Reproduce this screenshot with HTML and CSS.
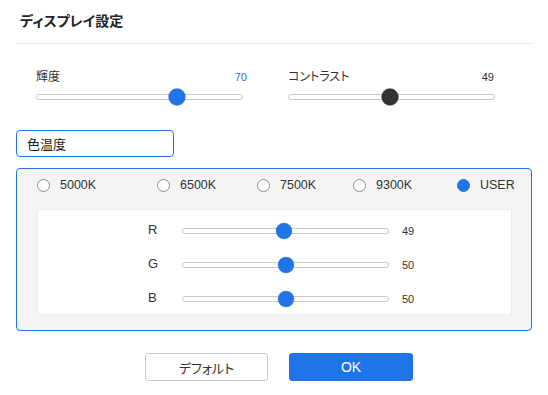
FILE: index.html
```html
<!DOCTYPE html>
<html lang="ja">
<head>
<meta charset="utf-8">
<title>ディスプレイ設定</title>
<link rel="stylesheet" href="styles.css">
</head>
<body>
<div class="dialog">
  <div class="header"><h1 class="title">ディスプレイ設定</h1></div>
  <div class="divider"></div>

  <div class="sliders">
    <div class="slider-block">
      <div class="slider-head"><span class="label">輝度</span><span class="value value-blue">70</span></div>
      <div class="track"><span class="thumb thumb-big" style="--v:0.70"></span></div>
    </div>
    <div class="slider-block">
      <div class="slider-head"><span class="label">コントラスト</span><span class="value">49</span></div>
      <div class="track"><span class="thumb thumb-big thumb-dark" style="--v:0.49"></span></div>
    </div>
  </div>

  <div class="tab-box">色温度</div>

  <div class="temp-box">
    <div class="radios">
      <label class="radio"><span class="dot"></span><span class="radio-text">5000K</span></label>
      <label class="radio"><span class="dot"></span><span class="radio-text">6500K</span></label>
      <label class="radio"><span class="dot"></span><span class="radio-text">7500K</span></label>
      <label class="radio"><span class="dot"></span><span class="radio-text">9300K</span></label>
      <label class="radio"><span class="dot dot-on"></span><span class="radio-text">USER</span></label>
    </div>
    <div class="rgb-box">
      <div class="rgb-row">
        <span class="rgb-label">R</span>
        <div class="track"><span class="thumb" style="--v:0.49"></span></div>
        <span class="rgb-value">49</span>
      </div>
      <div class="rgb-row">
        <span class="rgb-label">G</span>
        <div class="track"><span class="thumb" style="--v:0.50"></span></div>
        <span class="rgb-value">50</span>
      </div>
      <div class="rgb-row">
        <span class="rgb-label">B</span>
        <div class="track"><span class="thumb" style="--v:0.50"></span></div>
        <span class="rgb-value">50</span>
      </div>
    </div>
  </div>

  <div class="buttons">
    <button class="btn btn-default">デフォルト</button>
    <button class="btn btn-ok">OK</button>
  </div>
</div>
</body>
</html>
```

FILE: styles.css
```css
* { box-sizing: border-box; }

html, body {
  margin: 0;
  padding: 0;
  background: #ffffff;
}

body {
  font-family: "Liberation Sans", "Noto Sans CJK JP", sans-serif;
  font-feature-settings: "palt";
  color: #333333;
  width: 548px;
  height: 395px;
  overflow: hidden;
}

.dialog {
  width: 548px;
}

.header {
  padding: 11px 20px 0;
  height: 43px;
}

.title {
  margin: 0;
  font-size: 14px;
  line-height: 20px;
  font-weight: 700;
  color: #222222;
}

.divider {
  height: 1px;
  background: #e6e6e6;
  margin: 0 16px;
}

.sliders {
  display: grid;
  grid-template-columns: 207px 207px;
  column-gap: 45px;
  padding: 25px 0 0 36px;
}

.slider-head {
  display: flex;
  justify-content: space-between;
  align-items: center;
  height: 16px;
  line-height: 16px;
  margin-bottom: 9px;
}

.label {
  font-size: 12px;
  color: #333333;
}

.value {
  font-size: 11px;
  color: #333333;
  margin-right: 1px;
}

.value-blue {
  color: #1f74e8;
  margin-right: -4px;
}

.track {
  position: relative;
  height: 6px;
  border: 1px solid #c9c9c9;
  border-radius: 3px;
  background: #ffffff;
}

.thumb {
  position: absolute;
  top: 50%;
  left: calc(8px + (100% - 16px) * var(--v));
  width: 16px;
  height: 16px;
  border-radius: 50%;
  background: #1f74e8;
  transform: translate(-50%, -50%);
  box-shadow: 0 0 0 0.5px rgba(120, 120, 120, 0.35);
}

.thumb-big {
  width: 17px;
  height: 17px;
}

.thumb-dark {
  background: #333333;
}

.tab-box {
  margin: 30px 0 0 16px;
  width: 158px;
  height: 27px;
  border: 1px solid #1f74e8;
  border-radius: 4px;
  padding-left: 10px;
  display: flex;
  align-items: center;
  font-size: 13px;
  color: #222222;
}

.temp-box {
  margin: 11px 0 0 16px;
  width: 516px;
  height: 163px;
  border: 1px solid #1f74e8;
  border-radius: 4px;
  background: #f4f4f4;
  padding: 0 19px 0 20px;
}

.radios {
  display: grid;
  grid-template-columns: 120px 100px 96px 104px auto;
  height: 32px;
  align-items: center;
}

.radio {
  display: flex;
  align-items: center;
  gap: 10px;
}

.dot {
  width: 13px;
  height: 13px;
  border-radius: 50%;
  border: 1px solid #8c8c8c;
  background: #ffffff;
}

.dot-on {
  border-color: #1f74e8;
  background: #1f74e8;
}

.radio-text {
  font-size: 12.5px;
  color: #333333;
  line-height: 16px;
}

.rgb-box {
  margin-top: 8px;
  height: 106px;
  background: #ffffff;
  border: 1px solid #ebebeb;
  padding: 4px 0 0 110px;
}

.rgb-row {
  display: grid;
  grid-template-columns: 34px 207px auto;
  align-items: center;
  height: 34px;
}

.rgb-label {
  font-size: 13px;
  color: #333333;
  margin-top: -3px;
}

.rgb-value {
  font-size: 11px;
  color: #333333;
  padding-left: 13px;
}

.buttons {
  display: flex;
  gap: 21px;
  margin: 22px 0 0 145px;
}

.btn {
  height: 28px;
  width: 123px;
  border-radius: 3px;
  font-family: "Liberation Sans", "Noto Sans CJK JP", sans-serif;
  font-feature-settings: "palt";
  cursor: pointer;
  padding: 0;
}

.btn-default {
  background: #ffffff;
  border: 1px solid #c8c8c8;
  color: #333333;
  font-size: 13px;
}

.btn-ok {
  width: 124px;
  background: #1f74e8;
  border: 1px solid #1f74e8;
  color: #ffffff;
  font-size: 14px;
}
```
